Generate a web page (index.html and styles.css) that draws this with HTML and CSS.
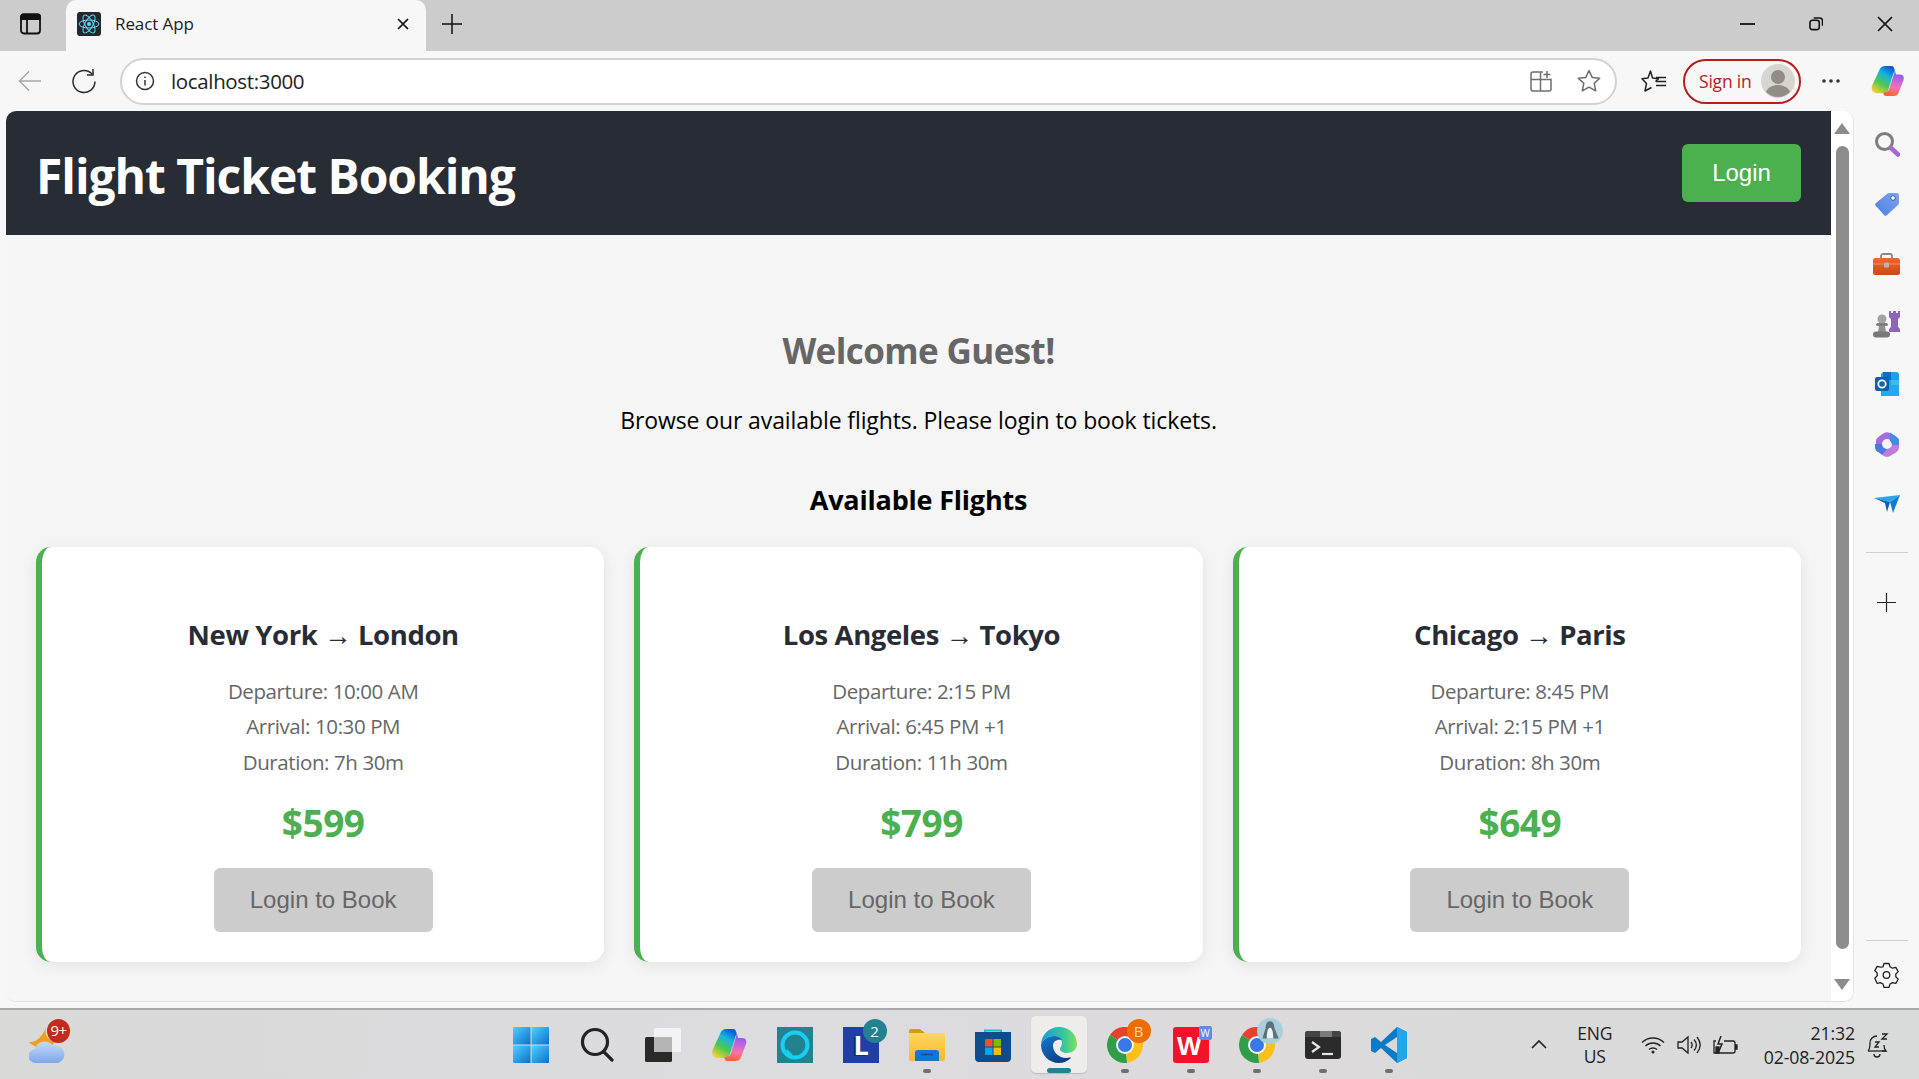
FILE: index.html
```html
<!DOCTYPE html>
<html lang="en">
<head>
    <meta charset="UTF-8">
    <meta name="viewport" content="width=device-width, initial-scale=1.0">
    <title>React App</title>
    <link rel="stylesheet" href="styles.css">
</head>
<body>
    <svg class="svg-defs" aria-hidden="true">
        <defs>
            <linearGradient id="winBlue" x1="0" y1="0" x2="1" y2="1"><stop offset="0" stop-color="#52d0fb"/><stop offset="1" stop-color="#0671cf"/></linearGradient>
            <linearGradient id="tagBlue" x1="0" y1="1" x2="1" y2="0"><stop offset="0" stop-color="#4a7fe0"/><stop offset="1" stop-color="#7fa6ee"/></linearGradient>
            <linearGradient id="boxOrange" x1="0" y1="0" x2="0" y2="1"><stop offset="0" stop-color="#ee6a2c"/><stop offset="1" stop-color="#cf4518"/></linearGradient>
            <linearGradient id="copLeft" x1="0.7" y1="0" x2="0.2" y2="1"><stop offset="0" stop-color="#0a5bd8"/><stop offset="0.3" stop-color="#18b4e0"/><stop offset="0.62" stop-color="#4cc850"/><stop offset="1" stop-color="#f8d030"/></linearGradient>
            <linearGradient id="copRight" x1="0.5" y1="0" x2="0.4" y2="1"><stop offset="0" stop-color="#2f5fe8"/><stop offset="0.38" stop-color="#b060e8"/><stop offset="0.72" stop-color="#f870b0"/><stop offset="1" stop-color="#fa6420"/></linearGradient>
            <linearGradient id="edgeTop" x1="0" y1="0.5" x2="1" y2="0.5"><stop offset="0" stop-color="#1a9ad6"/><stop offset="0.6" stop-color="#30c6a0"/><stop offset="1" stop-color="#7fe05a"/></linearGradient>
            <linearGradient id="edgeLow" x1="0" y1="0" x2="0.6" y2="1"><stop offset="0" stop-color="#1379c9"/><stop offset="1" stop-color="#0c3f8a"/></linearGradient>
            <linearGradient id="folder" x1="0" y1="0" x2="0" y2="1"><stop offset="0" stop-color="#ffd65c"/><stop offset="1" stop-color="#f7b92e"/></linearGradient>
            <linearGradient id="cloud" x1="0" y1="0" x2="0" y2="1"><stop offset="0" stop-color="#c4dcf8"/><stop offset="1" stop-color="#7ea6ea"/></linearGradient>
            <symbol id="chromeIcon" viewBox="0 0 36 36">
                <path d="M18 18L3 8A18 18 0 0 1 34.600 11Z" fill="#e5412f"/>
                <path d="M18 18L34.600 11A18 18 0 0 1 20 35.900Z" fill="#fbc118"/>
                <path d="M18 18L20 35.900A18 18 0 0 1 3 8Z" fill="#2f9e4a"/>
                <circle cx="18" cy="18" r="9" fill="#f4f4f4"/>
                <circle cx="18" cy="18" r="7" fill="#3b78e7"/>
            </symbol>
        </defs>
    </svg>

    <!-- tab strip -->
    <div class="tabstrip">
        <div class="panel-btn">
            <svg width="21" height="22" viewBox="0 0 21 22" fill="none" stroke="#111" stroke-width="1.800"><rect x="1" y="1.500" width="19" height="19" rx="3"/><path d="M1 3.500a2 2 0 0 1 2-2h15a2 2 0 0 1 2 2V6H1z" fill="#111"/><path d="M7 6v14"/></svg>
        </div>
        <div class="tab">
            <svg width="24" height="24" viewBox="0 0 24 24" fill="none" stroke="#61dafb" stroke-width="1"><rect width="24" height="24" rx="3" fill="#23272e" stroke="none"/><ellipse cx="12" cy="12" rx="10" ry="4"/><ellipse cx="12" cy="12" rx="10" ry="4" transform="rotate(60 12 12)"/><ellipse cx="12" cy="12" rx="10" ry="4" transform="rotate(120 12 12)"/><circle cx="12" cy="12" r="2" fill="#61dafb" stroke="none"/></svg>
            <span class="tab-title">React App</span>
            <svg class="tab-close" width="14" height="14" viewBox="0 0 14 14" stroke="#111" stroke-width="1.700"><path d="M2 2l10 10M12 2L2 12"/></svg>
        </div>
        <svg class="new-tab" width="20" height="20" viewBox="0 0 20 20" stroke="#111" stroke-width="1.500"><path d="M10 0v20M0 10h20"/></svg>
        <div class="window-btns">
            <svg width="15" height="16" viewBox="0 0 15 16" stroke="#111" stroke-width="1.800"><path d="M0 8h15"/></svg>
            <svg width="14" height="16" viewBox="0 0 15 16" fill="none" stroke="#111" stroke-width="1.700"><rect x="1" y="4" width="10" height="10" rx="2.500"/><path d="M5 1.500h6.500a3 3 0 0 1 3 3V10"/></svg>
            <svg width="16" height="16" viewBox="0 0 16 16" stroke="#111" stroke-width="1.700"><path d="M1 1l14 14M15 1L1 15"/></svg>
        </div>
    </div>

    <!-- address bar row -->
    <div class="toolbar">
        <svg class="nav-icon" width="24" height="24" viewBox="0 0 24 24" fill="none" stroke="#a9a9a9" stroke-width="1.500"><path d="M23 12H1.500M11 2.500L1.500 12l9.500 9.500"/></svg>
        <svg class="nav-icon reload" width="24" height="26" viewBox="0 0 24 26" fill="none" stroke="#2b2b2b" stroke-width="1.500"><path d="M20.500 6.500A11 11 0 1 0 23 13.500"/><path d="M21 1v6h-6"/></svg>
        <div class="addressbar">
            <svg width="20" height="20" viewBox="0 0 20 20" fill="none" stroke="#333" stroke-width="1.500"><circle cx="10" cy="10" r="8.500"/><path d="M10 9v5.500M10 5.500v1.500"/></svg>
            <span class="url">localhost:3000</span>
            <svg class="addr-grid" width="22" height="22" viewBox="0 0 22 22" fill="none" stroke="#6f6f6f" stroke-width="1.500"><path d="M13 2H3a2 2 0 0 0-2 2v15a2 2 0 0 0 2 2h16a2 2 0 0 0 2-2V9.500H1M10.500 2v19"/><path d="M17 1v7M13.500 4.500h7"/></svg>
            <svg class="addr-star" width="24" height="24" viewBox="0 0 24 24" fill="none" stroke="#6f6f6f" stroke-width="1.500" stroke-linejoin="round"><path d="M12 1.500l3.200 6.900 7.500.9-5.500 5.100 1.500 7.400L12 18.100l-6.700 3.700 1.500-7.400L1.300 9.300l7.500-.9z"/></svg>
        </div>
        <svg class="fav-icon" width="25" height="24" viewBox="0 0 25 24" fill="none" stroke="#222" stroke-width="1.500" stroke-linejoin="round"><path d="M14.500 12.500l3-2.800-6-.8L9.500 2 7 8.900l-6 .9 4.500 4.600L4 22l6.500-3.500"/><path d="M15 8.500h10M15 12.500h10M15 16.500h10"/></svg>
        <div class="signin">
            <span>Sign in</span>
            <svg width="34" height="34" viewBox="0 0 34 34"><circle cx="17" cy="17" r="17" fill="#d7d5cf"/><circle cx="17" cy="13" r="7" fill="#918c85"/><path d="M5 28c2-5 7-7 12-7s10 2 12 7a17 17 0 0 1-24 0z" fill="#918c85"/></svg>
        </div>
        <svg class="more-icon" width="20" height="6" viewBox="0 0 20 6" fill="#333"><circle cx="3" cy="3" r="1.800"/><circle cx="10" cy="3" r="1.800"/><circle cx="17" cy="3" r="1.800"/></svg>
        <svg class="copilot-top" width="35" height="32" viewBox="0 0 36 34"><path d="M23 1h-7c-4 0-6 2-7 5L2 21c-2 5 0 9 5 9h7c3 0 4-2 5-4l6-19c1-3-1-6-2-6z" fill="url(#copLeft)"/><path d="M21 1c3 0 4 2 5 5l1 4h4c4 0 5 3 4 6l-5 13c-1 3-3 4-6 4h-7c-3 0-4-2-3-4 3 0 5-1 6-4l5-16c1-3 0-6-4-8z" fill="url(#copRight)"/></svg>
    </div>

    <div class="workarea">
        <div class="browser-frame">
            <div class="page">
                <header class="app-header">
                    <h1>Flight Ticket Booking</h1>
                    <button class="login-btn">Login</button>
                </header>
                <main class="content">
                    <h2 class="welcome">Welcome Guest!</h2>
                    <p class="intro">Browse our available flights. Please login to book tickets.</p>
                    <h3 class="section-title">Available Flights</h3>
                    <div class="flight-grid">
                        <div class="flight-card">
                            <h3>New York → London</h3>
                            <p>Departure: 10:00 AM</p>
                            <p>Arrival: 10:30 PM</p>
                            <p>Duration: 7h 30m</p>
                            <div class="price">$599</div>
                            <button class="book-btn">Login to Book</button>
                        </div>
                        <div class="flight-card">
                            <h3>Los Angeles → Tokyo</h3>
                            <p>Departure: 2:15 PM</p>
                            <p>Arrival: 6:45 PM +1</p>
                            <p>Duration: 11h 30m</p>
                            <div class="price">$799</div>
                            <button class="book-btn">Login to Book</button>
                        </div>
                        <div class="flight-card">
                            <h3>Chicago → Paris</h3>
                            <p>Departure: 8:45 PM</p>
                            <p>Arrival: 2:15 PM +1</p>
                            <p>Duration: 8h 30m</p>
                            <div class="price">$649</div>
                            <button class="book-btn">Login to Book</button>
                        </div>
                    </div>
                </main>
            </div>
            <div class="scrollbar">
                <span class="arrow-up"></span>
                <span class="thumb"></span>
                <span class="arrow-down"></span>
            </div>
        </div>

        <!-- edge sidebar -->
        <aside class="sidebar">
            <div class="side-item"><svg width="26" height="26" viewBox="0 0 26 26" fill="none"><circle cx="10.500" cy="10.500" r="8" stroke="#7d7d7d" stroke-width="3"/><path d="M17 17l7 6.500" stroke="#a36ad6" stroke-width="4.500" stroke-linecap="round"/></svg></div>
            <div class="side-item"><svg width="24" height="24" viewBox="0 0 24 24"><path d="M14 1h8a2 2 0 0 1 2 2v8a3 3 0 0 1-1 2L12 23a2 2 0 0 1-3 0L1 14a2 2 0 0 1 0-3L12 2a3 3 0 0 1 2-1z" fill="url(#tagBlue)"/><circle cx="18" cy="6" r="2.300" fill="#fff" stroke="#3a55a8"/></svg></div>
            <div class="side-item"><svg width="27" height="22" viewBox="0 0 27 22" fill="none"><path d="M8 6V3a2 2 0 0 1 2-2h7a2 2 0 0 1 2 2v3" stroke="#8a8a8a" stroke-width="1.800"/><rect y="5" width="27" height="17" rx="2.500" fill="url(#boxOrange)"/><path d="M0 11h27" stroke="#f4925c" stroke-width="1"/><rect x="11" y="9.500" width="5" height="5" rx="1" fill="#b9b4ae"/></svg></div>
            <div class="side-item"><svg width="28" height="28" viewBox="0 0 28 28"><path d="M16 1h2v2h2V1h3v2h2V1h2v6l-2 2v8l2 2v3H16v-3l2-2V9l-2-2z" fill="#8e63bb"/><circle cx="9" cy="9" r="4.500" fill="#a3a3a3"/><rect x="3" y="13" width="12" height="3" rx="1.500" fill="#7d7d7d"/><path d="M6 16h6l1 6H5z" fill="#909090"/><rect y="21.500" width="17" height="6" rx="3" fill="#787878"/></svg></div>
            <div class="side-item"><svg width="24" height="24" viewBox="0 0 24 24"><path d="M8 0h13a3 3 0 0 1 3 3v21H6V2z" fill="#1aa4e8"/><path d="M8 0h8v8H8z" fill="#0a6fc4"/><path d="M16 8h8v8h-8z" fill="#3dbbf0"/><path d="M6 13l18 0v9a2 2 0 0 1-2 2H8a2 2 0 0 1-2-2z" fill="#28a8ea"/><rect y="5" width="14" height="14" rx="2" fill="#0a5fb0"/><circle cx="7" cy="12" r="3.700" fill="none" stroke="#fff" stroke-width="1.800"/></svg></div>
            <div class="side-item"><svg width="24" height="26" viewBox="0 0 24 26"><path d="M9 2a6 6 0 0 1 6 0l6 3.500a6 6 0 0 1 3 5V14h-7v-1a5 5 0 0 0-10 0L1 20V10.500a6 6 0 0 1 3-5z" fill="#a56be0"/><path d="M7 13a5 5 0 0 0 5 5l4-.5L7 24 4 21.500A6 6 0 0 1 0 16v-3z" fill="#4c78e0"/><path d="M24 11v5.500a6 6 0 0 1-3 5L15 25a6 6 0 0 1-6 0l-2-1 5-6a5 5 0 0 0 5-5z" fill="#c07ad8"/><path d="M15 1.500l6 4a6 6 0 0 1 3 5V14h-7a5 5 0 0 0-2-4z" fill="#4a8ae6"/></svg></div>
            <div class="side-item"><svg width="26" height="18" viewBox="0 0 26 18"><path d="M0 3l26-3-10 7z" fill="#2ba4e8"/><path d="M26 0L16 7l3 11z" fill="#0f7fd6"/><path d="M0 3l11 5 2 9 3-10z" fill="#0b5fb5"/></svg></div>
            <div class="side-divider"></div>
            <div class="side-plus"><svg width="19" height="19" viewBox="0 0 19 19" stroke="#222" stroke-width="1.200"><path d="M9.500 0v19M0 9.500h19"/></svg></div>
            <div class="side-divider bottom"></div>
            <div class="side-gear"><svg width="25" height="26" viewBox="0 0 25 26" fill="none" stroke="#222" stroke-width="1.300" stroke-linejoin="round"><path d="M10 1.500h5l1 3.300 2.500 1.400 3.300-.8 2.400 4.200-2.400 2.400v2.800l2.400 2.400-2.400 4.200-3.300-.8-2.500 1.400-1 3.300h-5l-1-3.300-2.500-1.400-3.300.8L.8 16.200l2.400-2.400V11l-2.400-2.400 2.400-4.200 3.300.8L9 4.800z"/><circle cx="12.500" cy="13" r="3.300"/></svg></div>
        </aside>
    </div>

    <!-- windows taskbar -->
    <footer class="taskbar">
        <div class="tray-left">
            <div class="weather">
                <svg width="36" height="36" viewBox="0 0 36 36"><path d="M17 0c-2 7 1 13 9 14-2 5-8 8-14 7S1 17 0 15c7 1 14-6 17-15z" fill="#f0a020"/><path d="M7 36a7 7 0 0 1-1-14 10 10 0 0 1 18-3 8.500 8.500 0 0 1 5 17z" fill="url(#cloud)"/></svg>
                <span class="weather-badge">9+</span>
            </div>
        </div>
        <div class="task-icons">
            <div class="task-item">
                <svg width="36" height="36" viewBox="0 0 36 36" fill="url(#winBlue)"><path d="M1 0h16.500v17.500H0V1a1 1 0 0 1 1-1z"/><path d="M18.500 0H35a1 1 0 0 1 1 1v16.500H18.500z"/><path d="M0 18.500h17.500V36H1a1 1 0 0 1-1-1z"/><path d="M18.500 18.500H36V35a1 1 0 0 1-1 1H18.500z"/></svg>
            </div>
            <div class="task-item">
                <svg width="34" height="36" viewBox="0 0 34 36" fill="none" stroke="#222" stroke-width="3.200" stroke-linecap="round"><circle cx="15" cy="15" r="12.500"/><path d="M24 25l8 8"/></svg>
            </div>
            <div class="task-item">
                <svg width="36" height="36" viewBox="0 0 36 36"><rect y="10" width="27" height="25" rx="1.500" fill="#2a2a2a"/><rect x="9" y="1" width="27" height="24" rx="1.500" fill="#f3f3f3"/><rect x="9" y="10" width="18" height="15" fill="#b5b5b5"/></svg>
            </div>
            <div class="task-item">
                <svg width="36" height="34" viewBox="0 0 36 34"><path d="M23 1h-7c-4 0-6 2-7 5L2 21c-2 5 0 9 5 9h7c3 0 4-2 5-4l6-19c1-3-1-6-2-6z" fill="url(#copLeft)"/><path d="M21 1c3 0 4 2 5 5l1 4h4c4 0 5 3 4 6l-5 13c-1 3-3 4-6 4h-7c-3 0-4-2-3-4 3 0 5-1 6-4l5-16c1-3 0-6-4-8z" fill="url(#copRight)"/></svg>
            </div>
            <div class="task-item">
                <svg width="36" height="36" viewBox="0 0 36 36" fill="none"><rect width="36" height="36" fill="#23828f"/><circle cx="18" cy="18" r="12.500" stroke="#19cdf5" stroke-width="4"/><path d="M8 29l2-7 6 6z" fill="#19cdf5"/></svg>
            </div>
            <div class="task-item">
                <div class="tile-l">L</div>
                <span class="task-badge teal">2</span>
            </div>
            <div class="task-item has-dot">
                <svg width="36" height="32" viewBox="0 0 36 32"><path d="M0 2a2 2 0 0 1 2-2h9l5 4h18a2 2 0 0 1 2 2v4H0z" fill="#d69a0c"/><path d="M0 4h36v26a2 2 0 0 1-2 2H2a2 2 0 0 1-2-2z" fill="url(#folder)"/><path d="M6 32V24a3 3 0 0 1 3-3h18a3 3 0 0 1 3 3v8z" fill="#0a78d4"/><path d="M12 25.500h12" stroke="#0a4f8f" stroke-width="1.500"/></svg>
            </div>
            <div class="task-item">
                <svg width="36" height="36" viewBox="0 0 36 36" fill="none"><path d="M10 9V3.500h16V9" stroke="#27b5e0" stroke-width="2"/><path d="M0 5h36v26a4 4 0 0 1-4 4H4a4 4 0 0 1-4-4z" fill="#0e4c8c"/><rect x="10" y="12" width="7.500" height="7.500" fill="#f25022"/><rect x="18.500" y="12" width="7.500" height="7.500" fill="#7fba00"/><rect x="10" y="20.500" width="7.500" height="7.500" fill="#00a4ef"/><rect x="18.500" y="20.500" width="7.500" height="7.500" fill="#ffb900"/></svg>
            </div>
            <div class="task-item active">
                <svg width="36" height="36" viewBox="0 0 36 36"><path d="M18 0c10 0 18 7 18 17 0 6-5 9-10 9-4 0-7-2-7-4 0-2 2-3 2-6 0-4-4-7-8-7C7 9 1 13 0 18 0 8 8 0 18 0z" fill="url(#edgeTop)"/><path d="M0 18c1-5 7-9 13-9 3 0 6 1 8 4-5-1-9 1-9 6 0 6 6 12 13 12 2 0 4-1 5 0-3 3-8 5-12 5C8 36 0 28 0 18z" fill="url(#edgeLow)"/></svg>
            </div>
            <div class="task-item has-dot">
                <svg width="36" height="36"><use href="#chromeIcon"/></svg>
                <span class="task-badge orange">B</span>
            </div>
            <div class="task-item has-dot">
                <svg width="36" height="36" viewBox="0 0 36 36"><rect width="36" height="36" rx="3" fill="#f4122a"/><text x="4" y="28" class="tile-wps">W</text></svg>
                <span class="wps-badge">W</span>
            </div>
            <div class="task-item has-dot">
                <svg width="36" height="36"><use href="#chromeIcon"/></svg>
                <svg class="profile-pic" width="26" height="26" viewBox="0 0 24 24"><circle cx="12" cy="12" r="12" fill="#a9cfdc"/><path d="M12 3c3 0 4 3 4 6l4 10H5l3-10c0-3 1-6 4-6z" fill="#5d6f78"/><path d="M12 9c2 0 3 4 3 10H9c0-6 1-10 3-10z" fill="#eef4f6"/></svg>
            </div>
            <div class="task-item has-dot">
                <svg width="36" height="28" viewBox="0 0 36 28" fill="none"><rect width="36" height="28" rx="3" fill="#2b2b2b"/><path d="M0 3a3 3 0 0 1 3-3h12v6H0z" fill="#444"/><path d="M15 0h12v6H15z" fill="#7b7b7b"/><path d="M27 0h6a3 3 0 0 1 3 3v3h-9z" fill="#444"/><path d="M7 11l7 5-7 5" stroke="#e6e6e6" stroke-width="2.200"/><path d="M17 23h11" stroke="#e6e6e6" stroke-width="2.200"/></svg>
            </div>
            <div class="task-item has-dot">
                <svg width="36" height="36" viewBox="0 0 36 36"><path d="M26 0l10 5v26l-10 5L10 21l-6 5-4-2V12l4-2 6 5z" fill="#0d7ac7"/><path d="M26 0l10 5v26l-10 5z" fill="#22a5ee"/><path d="M26 10L14 18l12 8z" fill="#d9d9d9"/></svg>
            </div>
        </div>
        <div class="tray-right">
            <svg class="tray-chevron" width="16" height="9" viewBox="0 0 16 9" fill="none" stroke="#222" stroke-width="1.700"><path d="M1 8l7-7 7 7"/></svg>
            <div class="lang"><span>ENG</span><span>US</span></div>
            <svg width="24" height="18" viewBox="0 0 24 18" fill="none" stroke="#222" stroke-width="1.300"><path d="M1 6.500c6-6 16-6 22 0M4.500 10c4-4 11-4 15 0M8 13.500c2-2 6-2 8 0"/><circle cx="12" cy="16" r="1.500" fill="#222" stroke="none"/></svg>
            <svg width="24" height="20" viewBox="0 0 24 20" fill="none" stroke="#222" stroke-width="1.300"><path d="M1 7h4l6-5v16l-6-5H1z"/><path d="M14 7c1.500 2 1.500 4 0 6M17 4.500c3 3.500 3 7.500 0 11M20 2c4 5 4 11 0 16"/></svg>
            <svg width="25" height="20" viewBox="0 0 25 20" fill="none" stroke="#222" stroke-width="1.300"><path d="M3 6H1v12h19a2 2 0 0 0 2-2V8a2 2 0 0 0-2-2h-9"/><path d="M22 10h2v4h-2" fill="#222"/><path d="M8 1L5 9h4l-3 7" stroke-width="1.500"/><path d="M3 12h3v6H3z" fill="#222"/></svg>
            <div class="clock"><span>21:32</span><span>02-08-2025</span></div>
            <svg class="bell" width="22" height="26" viewBox="0 0 22 26" fill="none" stroke="#222" stroke-width="1.300"><path d="M1 19c2-2 2-4 2-8s3-7 7-7M15 19c2 0 3 0 4 0-1-1-2-3-2-6"/><path d="M1 19h18"/><path d="M7 22a3 3 0 0 0 6 0"/><path d="M8 10h4l-4 5h4M15 2h5l-5 5h5"/></svg>
        </div>
    </footer>
</body>
</html>
```

FILE: styles.css
```css
* {
    box-sizing: border-box;
}

html,
body {
    height: 100%;
}

body {
    margin: 0;
    display: flex;
    flex-direction: column;
    overflow: hidden;
    font-family: "Open Sans", "Noto Sans", sans-serif;
    background-color: #f7f7f7;
    color: #000;
}

svg {
    display: block;
    flex-shrink: 0;
}

.svg-defs {
    width: 0;
    height: 0;
}

/* browser chrome */
.tabstrip {
    height: 51px;
    flex-shrink: 0;
    display: flex;
    align-items: center;
    padding-bottom: 3px;
    background-color: #cccccc;
}

.panel-btn {
    width: 66px;
    padding-left: 20px;
}

.tab {
    width: 360px;
    height: 51px;
    margin-bottom: -3px;
    padding: 0 0 3px 11px;
    display: flex;
    align-items: center;
    background-color: #f7f7f7;
    border-radius: 10px 10px 0 0;
}

.tab-title {
    margin: -2px 0 0 14px;
    font-size: 17px;
    letter-spacing: -0.1px;
    color: #222;
}

.tab-close {
    margin-left: auto;
    margin-right: 16px;
}

.new-tab {
    margin-left: 16px;
}

.window-btns {
    margin-left: auto;
    margin-right: 26px;
    display: flex;
    gap: 54px;
}

.toolbar {
    height: 60px;
    flex-shrink: 0;
    display: flex;
    align-items: center;
    background-color: #f7f7f7;
}

.nav-icon {
    margin-left: 18px;
}

.reload {
    margin-left: 30px;
}

.addressbar {
    width: 1497px;
    height: 47px;
    margin-left: 24px;
    padding-left: 13px;
    display: flex;
    align-items: center;
    background-color: #fff;
    border: 2px solid #d2d2d2;
    border-radius: 24px;
}

.url {
    margin-left: 16px;
    font-size: 20.5px;
    letter-spacing: -0.35px;
    color: #222;
}

.addr-grid {
    margin-left: auto;
}

.addr-star {
    margin-left: 25px;
    margin-right: 14px;
}

.fav-icon {
    margin-left: 24px;
}

.signin {
    width: 118px;
    height: 45px;
    margin-left: 17px;
    padding: 0 4px 0 14px;
    display: flex;
    align-items: center;
    justify-content: space-between;
    border: 2px solid #b91c1c;
    border-radius: 23px;
    color: #b91c1c;
    font-size: 17.5px;
    letter-spacing: -0.2px;
}

.more-icon {
    margin-left: 20px;
}

.copilot-top {
    margin-left: 29px;
}

.workarea {
    flex: 1;
    display: flex;
    min-height: 0;
}

/* the page inside the browser */
.browser-frame {
    flex: 1;
    margin: 0 0 6px 6px;
    display: flex;
    background-color: #fff;
    border-radius: 10px;
    border-right: 1px solid #e4e4e4;
    border-bottom: 1px solid #e0e0e0;
    overflow: hidden;
}

.page {
    flex: 1;
    min-width: 0;
    background-color: #f5f5f5;
}

.app-header {
    height: 124px;
    padding: 0 30px;
    display: flex;
    align-items: center;
    justify-content: space-between;
    background-color: #282c34;
    color: #fff;
}

.app-header h1 {
    margin: 5px 0 0;
    font-size: 48px;
    font-weight: 700;
    letter-spacing: -1.05px;
}

.login-btn {
    width: 119px;
    height: 58px;
    border: none;
    border-radius: 6px;
    background-color: #4caf50;
    color: #fff;
    font-family: "Liberation Sans", Arial, sans-serif;
    font-size: 24px;
    cursor: pointer;
}

.content {
    padding: 92px 30px 0;
    text-align: center;
}

.welcome {
    margin: 0;
    font-size: 35px;
    line-height: 48px;
    font-weight: 700;
    letter-spacing: -0.6px;
    color: #666;
}

.intro {
    margin: 29px 0 0;
    font-size: 23px;
    line-height: 32px;
    letter-spacing: -0.1px;
}

.section-title {
    margin: 45px 0 0;
    font-size: 27px;
    line-height: 38px;
    font-weight: 700;
    letter-spacing: -0.2px;
}

.flight-grid {
    margin-top: 28px;
    display: grid;
    grid-template-columns: repeat(3, 1fr);
    gap: 30px;
}

.flight-card {
    height: 415px;
    padding-top: 69px;
    background-color: #fff;
    border-left: 6px solid #4caf50;
    border-radius: 15px;
    box-shadow: 0 3px 15px rgba(0, 0, 0, 0.08);
}

.flight-card h3 {
    margin: 0 0 20px;
    font-size: 27.5px;
    line-height: 38px;
    font-weight: 700;
    letter-spacing: -0.4px;
    color: #282c34;
}

.flight-card p {
    margin: 0;
    font-size: 20.5px;
    line-height: 35.3px;
    letter-spacing: -0.4px;
    color: #666;
}

.price {
    margin-top: 19.1px;
    font-size: 37px;
    line-height: 48px;
    font-weight: 700;
    letter-spacing: -0.5px;
    color: #4caf50;
}

.book-btn {
    width: 219px;
    height: 64px;
    margin-top: 21px;
    border: none;
    border-radius: 6px;
    background-color: #ccc;
    color: #666;
    font-family: "Liberation Sans", Arial, sans-serif;
    font-size: 24px;
}

.scrollbar {
    width: 22px;
    flex-shrink: 0;
    padding-top: 12px;
    display: flex;
    flex-direction: column;
    align-items: center;
    background-color: #fff;
}

.thumb {
    width: 13px;
    height: 803px;
    margin: 12px 0 30px;
    background-color: #8c8c8c;
    border-radius: 7px;
}

.arrow-up,
.arrow-down {
    width: 0;
    height: 0;
    border-left: 8px solid transparent;
    border-right: 8px solid transparent;
}

.arrow-up {
    border-bottom: 11px solid #8c8c8c;
}

.arrow-down {
    border-top: 11px solid #8c8c8c;
}

/* edge sidebar */
.sidebar {
    width: 65px;
    flex-shrink: 0;
    padding-top: 3px;
    display: flex;
    flex-direction: column;
    align-items: center;
    background-color: #f7f7f7;
}

.side-item {
    height: 60px;
    display: flex;
    align-items: center;
    justify-content: center;
}

.side-divider {
    width: 42px;
    height: 1px;
    margin-top: 18px;
    background-color: #cfcfcf;
}

.side-divider.bottom {
    margin-top: auto;
}

.side-plus {
    margin-top: 40px;
}

.side-gear {
    margin: 21px 0 20px;
}

/* taskbar */
.taskbar {
    height: 71px;
    flex-shrink: 0;
    display: grid;
    grid-template-columns: 1fr auto 1fr;
    align-items: center;
    border-top: 2px solid #a9a9a9;
    background: linear-gradient(90deg, #d9d9d8, #dcdbdf 40%, #dcdadb 65%, #d9dada);
}

.tray-left {
    padding-left: 29px;
}

.weather {
    position: relative;
    width: 36px;
    height: 36px;
}

.weather-badge {
    position: absolute;
    top: -8px;
    left: 18px;
    width: 23px;
    height: 24px;
    border-radius: 50%;
    background-color: #c42b1c;
    color: #fff;
    font-size: 15px;
    line-height: 23px;
    text-align: center;
    letter-spacing: -0.5px;
}

.task-icons {
    display: flex;
}

.task-item {
    position: relative;
    width: 66px;
    height: 57px;
    display: flex;
    align-items: center;
    justify-content: center;
}

.task-item.has-dot::after,
.task-item.active::after {
    content: "";
    position: absolute;
    left: 29px;
    bottom: 0;
    width: 8px;
    height: 4px;
    border-radius: 2px;
    background-color: #6e6e6e;
}

.task-item.active {
    width: 56px;
    margin: 0 5px;
    background-color: #f0ecec;
    border-radius: 5px;
    box-shadow: 0 1px 1px rgba(0, 0, 0, 0.15);
}

.task-item.active::after {
    left: 16px;
    width: 24px;
    height: 5px;
    border-radius: 3px;
    background-color: #23828f;
}

.tile-l {
    width: 36px;
    height: 36px;
    padding-left: 11px;
    background-color: #1f3ea8;
    color: #fff;
    font-size: 27px;
    font-weight: 700;
    line-height: 36px;
    text-shadow: -2px 1px 0 #12306a;
}

.task-badge {
    position: absolute;
    top: 3px;
    left: 35px;
    width: 24px;
    height: 24px;
    border-radius: 50%;
    color: #fff;
    font-size: 15px;
    line-height: 24px;
    text-align: center;
}

.task-badge.teal {
    background-color: #23828f;
}

.task-badge.orange {
    background-color: #ef6c00;
    color: #ffd9b8;
}

.wps-badge {
    position: absolute;
    top: 10px;
    left: 41px;
    width: 13px;
    height: 14px;
    border-radius: 2px;
    background-color: #5b8def;
    color: #fff;
    font-size: 10px;
    line-height: 14px;
    text-align: center;
}

.profile-pic {
    position: absolute;
    top: 2px;
    left: 33px;
}

.tile-wps {
    font-family: "Liberation Sans", sans-serif;
    font-size: 26px;
    font-weight: 700;
    fill: #fff;
}

.tray-right {
    display: flex;
    align-items: center;
    justify-content: flex-end;
    gap: 12px;
    padding-right: 30px;
    color: #222;
}

.tray-chevron {
    margin-right: 16px;
}

.lang {
    width: 40px;
    margin-right: 14px;
    display: flex;
    flex-direction: column;
    align-items: center;
    font-size: 17.5px;
    line-height: 23px;
    letter-spacing: -0.3px;
}

.clock {
    margin-left: 14px;
    display: flex;
    flex-direction: column;
    align-items: flex-end;
    font-size: 17.7px;
    line-height: 24px;
    letter-spacing: -0.1px;
}
```
